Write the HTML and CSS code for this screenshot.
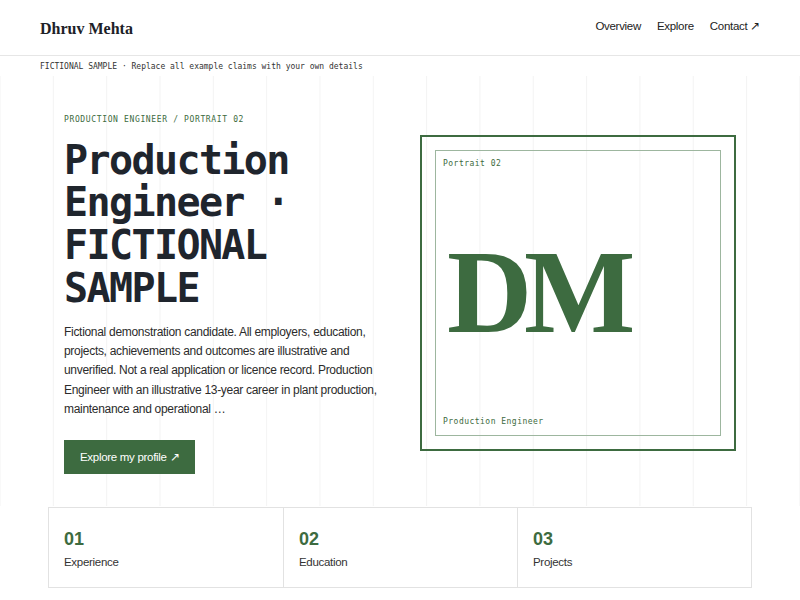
FILE: index.html
```html
<!DOCTYPE html>
<html lang="en">
<head>
<meta charset="utf-8">
<title>Dhruv Mehta</title>
<link rel="stylesheet" href="styles.css">
</head>
<body>
<header class="site-header">
  <div class="logo">Dhruv Mehta</div>
  <nav class="nav">
    <a href="#">Overview</a>
    <a href="#">Explore</a>
    <a href="#">Contact ↗</a>
  </nav>
</header>
<div class="notice">FICTIONAL SAMPLE · Replace all example claims with your own details</div>
<section class="hero">
  <div class="hero-text">
    <div class="eyebrow">PRODUCTION ENGINEER / PORTRAIT 02</div>
    <h1 class="title">Production Engineer · FICTIONAL SAMPLE</h1>
    <p class="lead">Fictional demonstration candidate. All employers, education, projects, achievements and outcomes are illustrative and unverified. Not a real application or licence record. Production Engineer with an illustrative 13-year career in plant production, maintenance and operational …</p>
    <a class="btn" href="#">Explore my profile ↗</a>
  </div>
  <div class="portrait">
    <div class="portrait-inner">
      <div class="portrait-label">Portrait 02</div>
      <div class="monogram">DM</div>
      <div class="portrait-label">Production Engineer</div>
    </div>
  </div>
</section>
<section class="cards">
  <div class="card"><div class="num">01</div><div class="card-label">Experience</div></div>
  <div class="card"><div class="num">02</div><div class="card-label">Education</div></div>
  <div class="card"><div class="num">03</div><div class="card-label">Projects</div></div>
</section>
</body>
</html>
```
FILE: styles.css
```css
* { box-sizing: border-box; }
html, body { margin: 0; padding: 0; background: #fff; }
body { font-family: "Liberation Sans", Arial, sans-serif; color: #222; overflow: hidden; }

.site-header {
  height: 56px;
  padding: 0 40px;
  display: flex;
  align-items: center;
  justify-content: space-between;
  border-bottom: 1px solid #e6e6e6;
}
.logo {
  font-family: "Liberation Serif", "Times New Roman", serif;
  font-weight: bold;
  font-size: 16px;
  color: #1d2127;
  padding-top: 2px;
}
.nav { display: flex; align-items: baseline; gap: 16px; padding-bottom: 3px; }
.nav a { color: #222; text-decoration: none; font-size: 11.5px; letter-spacing: -0.3px; line-height: 14px; }

.notice {
  height: 20px;
  padding: 0 40px;
  display: flex;
  align-items: center;
  font-family: "DejaVu Sans Mono", monospace;
  font-size: 8px;
  color: #333;
}

.hero {
  height: 430px;
  padding: 4px 64px 0;
  display: grid;
  grid-template-columns: 316px 316px;
  column-gap: 40px;
  align-items: center;
  background-image: linear-gradient(to right, #f3f3f3 1px, transparent 1px);
  background-size: 53.333px 100%;
  background-position: -0.5px 0;
}
.hero-text { padding-top: 3px; }
.eyebrow {
  font-family: "DejaVu Sans Mono", monospace;
  font-size: 8px;
  letter-spacing: 0.08em;
  color: #3d6b40;
  margin-bottom: 15px;
}
.title {
  margin: 0 0 13px;
  font-family: "DejaVu Sans Mono", monospace;
  font-weight: bold;
  font-size: 40px;
  line-height: 1.07;
  letter-spacing: -0.04em;
  color: #1f252d;
}
.lead {
  margin: 0 0 21px;
  font-size: 12px;
  letter-spacing: -0.3px;
  line-height: 19.3px;
  color: #2b2b2b;
}
.btn {
  display: inline-block;
  background: #3d6b40;
  color: #fff;
  text-decoration: none;
  font-size: 11.5px;
  letter-spacing: -0.3px;
  padding: 10px 16px;
  line-height: 14px;
}

.portrait {
  width: 316px;
  height: 316px;
  border: 2px solid #3d6b40;
  padding: 13px;
}
.portrait-inner {
  height: 100%;
  border: 1px solid #9db69f;
  padding: 8px 7px 9px;
  display: flex;
  flex-direction: column;
  justify-content: space-between;
}
.portrait-label {
  font-family: "DejaVu Sans Mono", monospace;
  font-size: 8px;
  letter-spacing: 0.06em;
  color: #3d6b40;
}
.monogram {
  font-family: "Liberation Serif", "Times New Roman", serif;
  font-weight: bold;
  font-size: 118px;
  line-height: 1;
  letter-spacing: -0.07em;
  color: #3d6b40;
  padding-left: 4px;
}

.cards {
  margin: 1px 48px 0;
  display: grid;
  grid-template-columns: repeat(3, 1fr);
  border: 1px solid #e2e2e2;
}
.card {
  height: 79px;
  padding: 20px 15px 0;
  border-left: 1px solid #e2e2e2;
}
.card:first-child { border-left: none; }
.num {
  font-size: 18px;
  font-weight: bold;
  color: #3d6b40;
  line-height: 22px;
}
.card-label {
  margin-top: 6px;
  font-size: 11.5px;
  letter-spacing: -0.3px;
  color: #333;
}
```
